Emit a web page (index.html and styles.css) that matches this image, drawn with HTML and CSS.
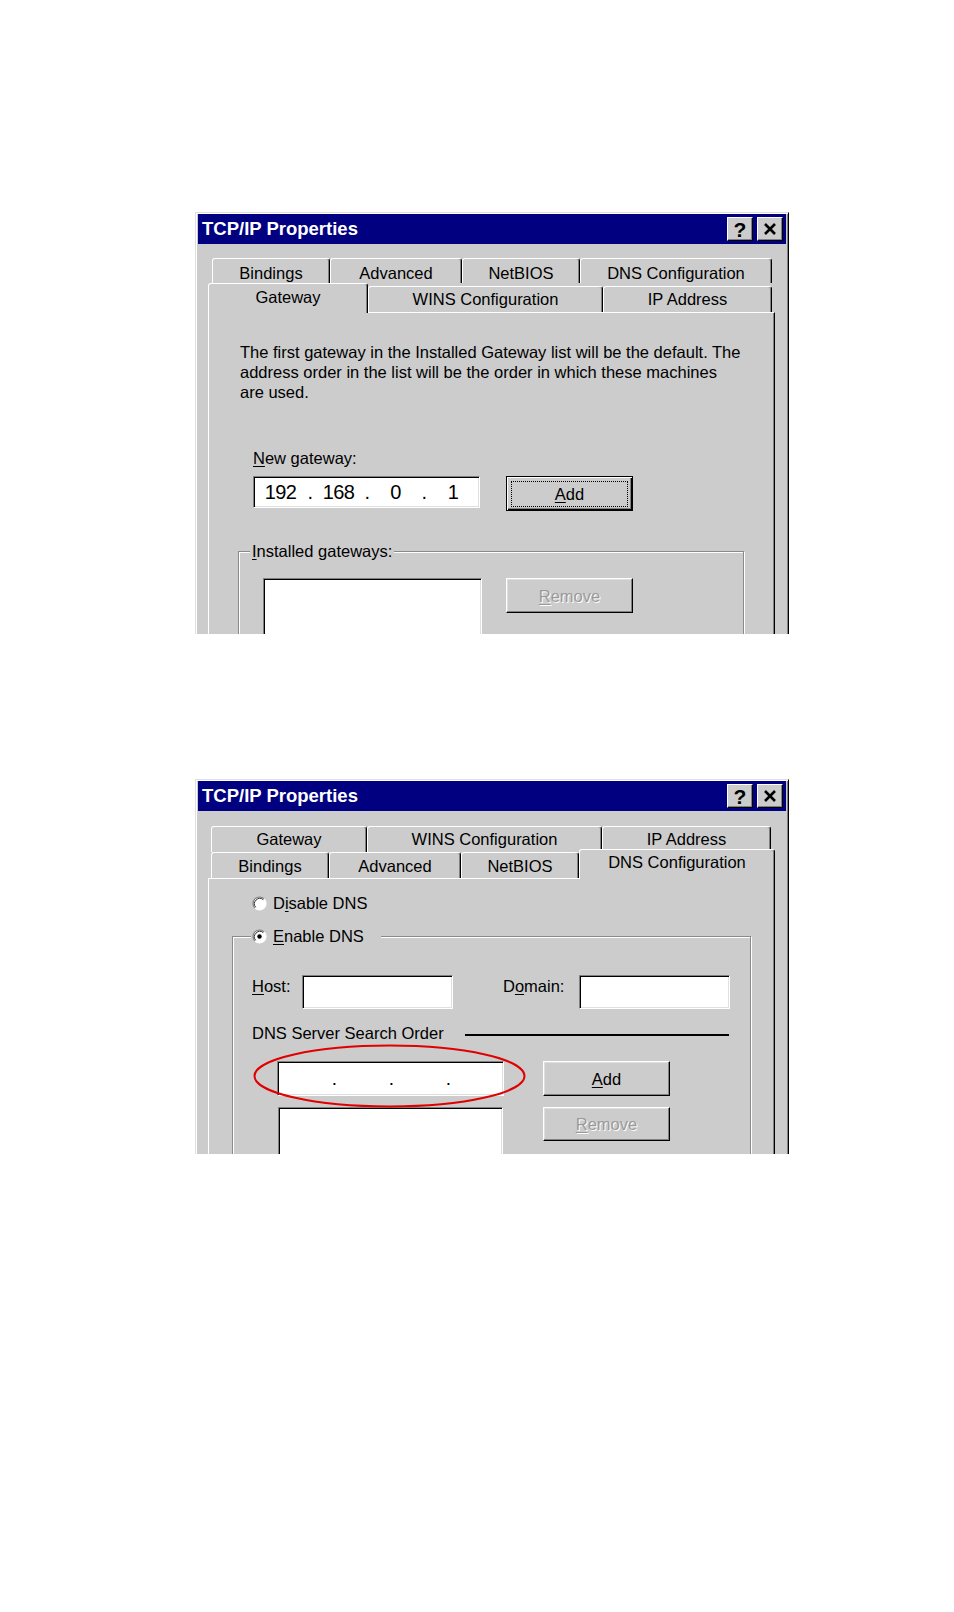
FILE: index.html
```html
<!DOCTYPE html>
<html>
<head>
<meta charset="utf-8">
<title>TCP/IP Properties</title>
<link rel="stylesheet" href="styles.css">
</head>
<body>
<div class="page">

  <div class="shot shot-1 d1">
    <div class="win">
      <div class="titlebar">
        <span class="title">TCP/IP Properties</span>
        <div class="tb-buttons">
          <span class="tb-btn">?</span>
          <span class="tb-btn"><svg width="14" height="12" viewBox="0 0 14 12"><path d="M2 1 L12 11 M12 1 L2 11" stroke="#000" stroke-width="2.6" fill="none"/></svg></span>
        </div>
      </div>
      <div class="sheet">
        <div class="tab-row back">
          <div class="tab t-bind">Bindings</div>
          <div class="tab t-adv">Advanced</div>
          <div class="tab t-net">NetBIOS</div>
          <div class="tab t-dns">DNS Configuration</div>
        </div>
        <div class="tab-row front">
          <div class="tab t-gw sel">Gateway</div>
          <div class="tab t-wins">WINS Configuration</div>
          <div class="tab t-ip">IP Address</div>
        </div>
        <div class="panel">
          <p class="intro">The first gateway in the Installed Gateway list will be the default. The<br>address order in the list will be the order in which these machines<br>are used.</p>
          <div class="field-label"><u>N</u>ew gateway:</div>
          <div class="gw-row">
            <div class="input ip ip-1">
              <span class="oct o1">192</span><span class="dot">.</span><span class="oct o2">168</span><span class="dot">.</span><span class="oct o3">0</span><span class="dot">.</span><span class="oct o4">1</span>
            </div>
            <div class="btn default btn-add-1"><span class="focus"><span><u>A</u>dd</span></span></div>
          </div>
          <fieldset class="group group-1">
            <legend><u>I</u>nstalled gateways:</legend>
            <div class="list-row-1">
              <div class="listbox lb-1"></div>
              <div class="btn disabled btn-rem-1"><span><u>R</u>emove</span></div>
            </div>
          </fieldset>
        </div>
      </div>
    </div>
  </div>

  <div class="shot shot-2 d2">
    <div class="win">
      <div class="titlebar">
        <span class="title">TCP/IP Properties</span>
        <div class="tb-buttons">
          <span class="tb-btn">?</span>
          <span class="tb-btn"><svg width="14" height="12" viewBox="0 0 14 12"><path d="M2 1 L12 11 M12 1 L2 11" stroke="#000" stroke-width="2.6" fill="none"/></svg></span>
        </div>
      </div>
      <div class="sheet">
        <div class="tab-row back">
          <div class="tab t-gw">Gateway</div>
          <div class="tab t-wins">WINS Configuration</div>
          <div class="tab t-ip">IP Address</div>
        </div>
        <div class="tab-row front">
          <div class="tab t-bind">Bindings</div>
          <div class="tab t-adv">Advanced</div>
          <div class="tab t-net">NetBIOS</div>
          <div class="tab t-dns sel">DNS Configuration</div>
        </div>
        <div class="panel">
          <div class="radio-row">
            <svg class="radio" width="15" height="15" viewBox="0 0 15 15">
              <circle cx="7.5" cy="7.5" r="6.5" fill="#fff"/>
              <path d="M2.9 12.1 A6.5 6.5 0 0 1 12.1 2.9" stroke="#808080" stroke-width="1.2" fill="none"/>
              <path d="M3.7 11.3 A5.4 5.4 0 0 1 11.3 3.7" stroke="#303030" stroke-width="1" fill="none"/>
              <path d="M12.1 2.9 A6.5 6.5 0 0 1 2.9 12.1" stroke="#fff" stroke-width="1.2" fill="none"/>
            </svg>
            <span>D<u>i</u>sable DNS</span>
          </div>
          <fieldset class="group group-2">
            <legend>
              <span class="radio-row inline">
                <svg class="radio" width="15" height="15" viewBox="0 0 15 15">
                  <circle cx="7.5" cy="7.5" r="6.5" fill="#fff"/>
                  <path d="M2.9 12.1 A6.5 6.5 0 0 1 12.1 2.9" stroke="#808080" stroke-width="1.2" fill="none"/>
                  <path d="M3.7 11.3 A5.4 5.4 0 0 1 11.3 3.7" stroke="#303030" stroke-width="1" fill="none"/>
                  <path d="M12.1 2.9 A6.5 6.5 0 0 1 2.9 12.1" stroke="#fff" stroke-width="1.2" fill="none"/>
                  <circle cx="7.5" cy="7.5" r="2.2" fill="#000"/>
                </svg>
                <span><u>E</u>nable DNS</span>
              </span>
            </legend>
            <div class="host-row">
              <span class="lbl lbl-host"><u>H</u>ost:</span>
              <div class="input txt"></div>
              <span class="lbl lbl-domain">D<u>o</u>main:</span>
              <div class="input txt"></div>
            </div>
            <div class="order-row">
              <span>DNS Server Search Order</span>
              <span class="order-line"></span>
            </div>
            <div class="ip2-row">
              <div class="ip-wrap">
                <div class="input ip ip-2">
                  <span class="oct o1"></span><span class="dot">.</span><span class="oct o2"></span><span class="dot">.</span><span class="oct o3"></span><span class="dot">.</span><span class="oct o4"></span>
                </div>
                <svg class="callout" width="273" height="64" viewBox="0 0 273 64"><ellipse cx="136.5" cy="32" rx="135" ry="30.5" stroke="#e00000" stroke-width="2" fill="none"/></svg>
              </div>
              <div class="btn btn-add-2"><span><u>A</u>dd</span></div>
            </div>
            <div class="list2-row">
              <div class="listbox lb-2"></div>
              <div class="btn disabled btn-rem-2"><span><u>R</u>emove</span></div>
            </div>
          </fieldset>
        </div>
      </div>
    </div>
  </div>

</div>
</body>
</html>
```
FILE: styles.css
```css
* { box-sizing: border-box; }
html, body { margin: 0; background: #fff; }
body {
  font-family: "Liberation Sans", Arial, sans-serif;
  font-size: 16.5px;
  line-height: 20px;
  color: #000;
}
u { text-decoration: underline; text-underline-offset: 2px; }

.page { padding: 212px 0 0 195px; }

.shot { width: 594px; overflow: hidden; }
.shot-1 { height: 422px; }
.shot-2 { height: 375px; margin-top: 145px; }

.win {
  height: 700px;
  background: #cccccc;
  border: 1px solid;
  border-color: #dfdfdf #000 #000 #dfdfdf;
  box-shadow: inset 1px 1px #fff, inset -1px -1px #808080;
  padding: 1px 2px 0 2px;
}

.titlebar {
  height: 30px;
  background: #000080;
  display: flex;
  align-items: center;
  justify-content: space-between;
  padding: 0 3px 0 4px;
}
.title { color: #fff; font-weight: bold; font-size: 18.5px; }
.tb-buttons { display: flex; gap: 4px; }
.tb-btn {
  width: 26px; height: 24px;
  background: #cccccc;
  border: 1px solid;
  border-color: #fff #000 #000 #fff;
  box-shadow: inset -1px -1px #808080;
  display: flex; align-items: center; justify-content: center;
  font-weight: bold; font-size: 21px; line-height: 1;
}

/* property sheet */
.sheet { margin: 14px 11px 0 10px; }
.d2 .sheet { margin-top: 15px; }

.tab-row { display: flex; align-items: flex-end; }
.tab {
  flex: none;
  background: #cccccc;
  border-top: 1px solid #fff;
  border-left: 1px solid #fff;
  border-right: 1px solid #000;
  border-radius: 3px 3px 0 0;
  box-shadow: inset -1px 0 #808080;
  text-align: center;
  white-space: nowrap;
}
.tab.sel { position: relative; z-index: 1; margin-bottom: -1px; }

.t-bind { width: 118px; }
.t-adv { width: 132px; }
.t-net { width: 118px; }
.t-dns { width: 192px; }
.t-gw { width: 156px; }
.t-wins { width: 235px; }
.t-ip { width: 169px; }
.t-gw.sel { width: 160px; }
.t-dns.sel { width: 196px; }

.d1 .back { height: 25px; padding-left: 4px; }
.d1 .back .tab { height: 25px; padding-top: 4px; }
.d1 .front { height: 29px; }
.d1 .front .tab { height: 26px; padding-top: 2px; }
.d1 .front .tab.sel { height: 30px; padding-top: 3px; }

.d2 .back { height: 26px; padding-left: 3px; }
.d2 .back .tab { height: 26px; padding-top: 2px; }
.d2 .front { height: 26px; padding-left: 3px; }
.d2 .front .tab { height: 26px; padding-top: 3px; }
.d2 .front .tab.sel { height: 30px; padding-top: 2px; }

.panel {
  height: 600px;
  background: #cccccc;
  border-top: 1px solid #fff;
  border-left: 1px solid #fff;
  border-right: 1px solid #000;
  box-shadow: inset -1px 0 #808080;
}

/* controls */
.input {
  background: #fff;
  border: 1px solid;
  border-color: #808080 #fff #fff #808080;
  box-shadow: inset 1px 1px #000, inset -1px -1px #dfdfdf;
}
.listbox {
  background: #fff;
  border: 1px solid;
  border-color: #808080 #fff #fff #808080;
  box-shadow: inset 1px 1px #000, inset -1px -1px #dfdfdf;
}
.btn {
  flex: none;
  width: 127px;
  display: flex; align-items: center; justify-content: center;
  background: #cccccc;
  border: 1px solid;
  border-color: #fff #000 #000 #fff;
  box-shadow: inset -1px -1px #808080, inset 1px 1px #dfdfdf;
}
.btn.default {
  border-color: #000;
  box-shadow: inset 1px 1px #fff, inset -1px -1px #000, inset -2px -2px #808080;
  padding: 4px 4px 3px 4px;
  align-items: stretch;
}
.focus {
  flex: 1;
  border: 1px dotted #000;
  display: flex; align-items: center; justify-content: center;
}
.btn.disabled { color: #9a9a9a; text-shadow: 1px 1px #fff; }

.ip {
  display: flex;
  font-family: "Liberation Sans", Arial, sans-serif;
  font-size: 20px;
  letter-spacing: -0.6px;
}
.oct { text-align: center; }
.o1 { width: 53px; }
.o2, .o3 { width: 51px; }
.o4 { flex: 1; }
.dot { width: 6px; text-align: center; }

/* gateway page */
.intro { margin: 29px 0 0 31px; }
.field-label { margin: 46px 0 0 44px; }
.gw-row { display: flex; align-items: flex-start; margin: 8px 0 0 44px; }
.ip-1 { width: 227px; height: 32px; line-height: 30px; }
.btn-add-1 { height: 35px; margin-left: 26px; }

.group {
  margin: 0; padding: 0; min-width: 0;
  border: 1px solid #8a8a8a;
  box-shadow: inset 1px 1px #fff, 1px 1px #fff;
}
.group legend {
  background: #cccccc;
  line-height: 20px;
}
.group-1 { margin: 30px 0 0 29px; width: 506px; }
.group-1 legend { margin-left: 11px; padding: 0 2px; }
.list-row-1 { display: flex; align-items: flex-start; margin: 17px 0 0 24px; }
.lb-1 { width: 219px; height: 100px; }
.btn-rem-1 { height: 35px; margin-left: 24px; }

/* DNS page */
.radio-row { display: flex; align-items: center; gap: 6px; margin: 14px 0 0 43px; }
.radio-row.inline { margin: 0 0 0 -1px; }
.radio { flex: none; }
.group-2 { margin: 13px 0 0 23px; width: 519px; }
.group-2 legend { margin-left: 18px; padding: 0 17px 0 2px; }

.host-row { display: flex; align-items: flex-start; margin: 29px 0 0 19px; }
.lbl { margin-top: 1px; flex: none; }
.lbl-host { width: 50px; }
.lbl-domain { width: 76px; margin-left: 50px; }
.txt { width: 151px; height: 34px; flex: none; }

.order-row { display: flex; align-items: center; width: 477px; margin: 14px 0 0 19px; }
.order-line { flex: 1; height: 2px; background: #000; margin: 3px 0 0 21px; }

.ip2-row { display: flex; align-items: flex-start; margin: 18px 0 0 44px; }
.ip-wrap { position: relative; }
.ip-2 { width: 227px; height: 35px; line-height: 33px; font-size: 19px; }
.callout { position: absolute; left: -24px; top: -17px; }
.btn-add-2 { height: 35px; margin-left: 39px; }

.list2-row { display: flex; align-items: flex-start; margin: 11px 0 0 45px; }
.lb-2 { width: 225px; height: 100px; }
.btn-rem-2 { height: 34px; margin-left: 40px; }
```
